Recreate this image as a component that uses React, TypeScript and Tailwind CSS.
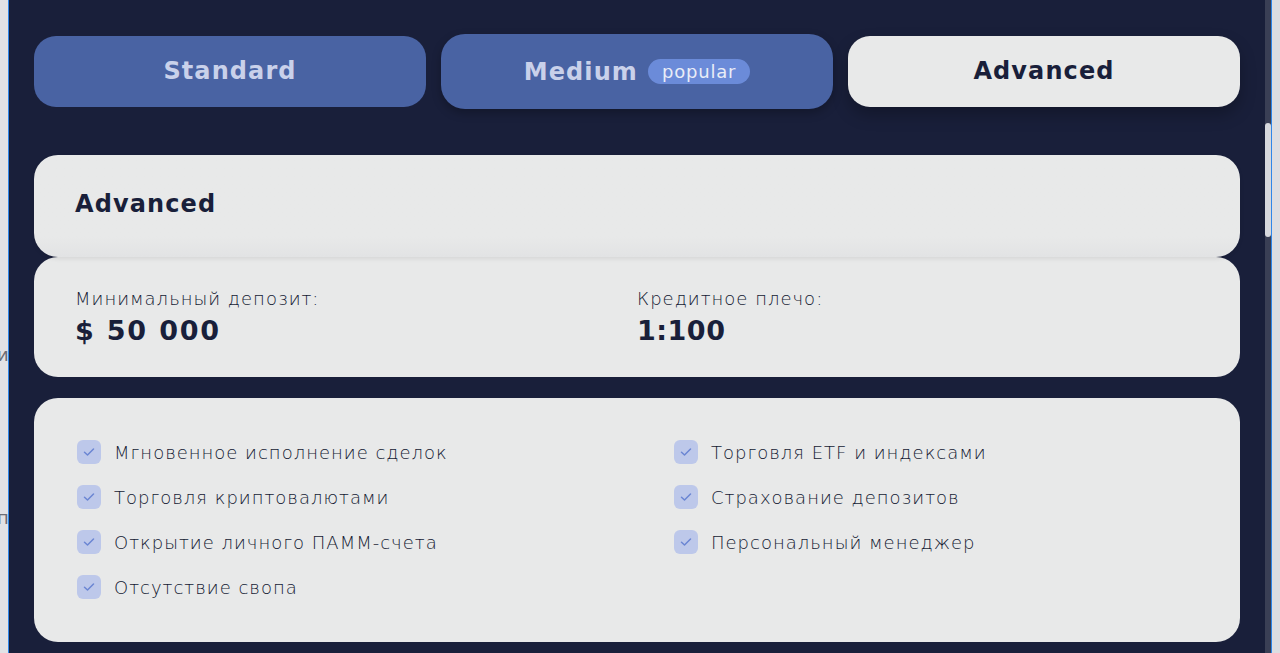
import React from "react";

const leftItems = [
  "Мгновенное исполнение сделок",
  "Торговля криптовалютами",
  "Открытие личного ПАММ-счета",
  "Отсутствие свопа",
];
const rightItems = [
  "Торговля ETF и индексами",
  "Страхование депозитов",
  "Персональный менеджер",
];

const head = { fontFamily: '"DejaVu Sans", "Liberation Sans", sans-serif' };
const body = { fontFamily: '"DejaVu Sans", "Liberation Sans", sans-serif' };

function Check() {
  return (
    <div className="w-6 h-6 rounded-[6px] bg-[#bdc8ea] flex items-center justify-center shrink-0">
      <svg width="12" height="10" viewBox="0 0 12 10" fill="none">
        <path d="M1.5 5.2 L4.5 8 L10.5 2" stroke="#6b86d3" strokeWidth="1.5" strokeLinecap="round" strokeLinejoin="round" />
      </svg>
    </div>
  );
}

function Item({ text }: { text: string }) {
  return (
    <div className="flex items-center gap-[13px] h-6">
      <Check />
      <span className="text-[18px] font-light text-[#141a33] tracking-[1px] whitespace-nowrap" style={body}>
        {text}
      </span>
    </div>
  );
}

export default function App() {
  return (
    <div className="w-full h-[653px] flex overflow-hidden bg-[#191f3a]">
      <div className="w-[8px] h-full bg-[#e1e2e5] overflow-hidden flex flex-col text-[#6b6d75] text-[18px] leading-none pt-[346px]" style={body}>
        <span className="-ml-[3px]">и</span>
        <span className="-ml-[3px] mt-[145px]">п</span>
      </div>
      <div className="w-px h-full bg-[#2f86e8]" />
      <div className="flex-1 h-full px-[25px] pt-[34px]">
        <div className="grid grid-cols-3 gap-[15px] items-center">
          <div className="h-[71px] rounded-[22px] bg-[#4963a3] flex items-center justify-center">
            <span className="text-[24px] font-bold text-[#c9d1ea] tracking-[1.1px] -mt-[2px]" style={head}>Standard</span>
          </div>
          <div className="h-[75px] rounded-[24px] bg-[#4963a3] flex items-center justify-center gap-[10px] shadow-[0_4px_10px_rgba(0,0,0,0.25)]">
            <span className="text-[24px] font-bold text-[#c9d1ea] tracking-[1.1px]" style={head}>Medium</span>
            <span className="h-[25px] px-[14px] rounded-full bg-[#6b8bd9] text-[#e9edf7] text-[18px] tracking-[0.8px] flex items-center" style={body}>popular</span>
          </div>
          <div className="h-[71px] rounded-[22px] bg-[#e8e9e9] flex items-center justify-center shadow-[0_8px_16px_rgba(0,0,0,0.25)]">
            <span className="text-[24px] font-bold text-[#191f3a] tracking-[1.1px] -mt-[2px]" style={head}>Advanced</span>
          </div>
        </div>

        <div className="mt-[46px] h-[102px] rounded-[24px] bg-gradient-to-b from-[#e8e9e9] from-80% to-[#e2e3e4] flex items-center pl-[41px] shadow-[0_2px_4px_rgba(0,0,0,0.08)] relative z-10">
          <span className="text-[24px] font-bold text-[#191f3a] tracking-[1.1px] -mt-[4px]" style={head}>Advanced</span>
        </div>

        <div className="h-[120px] rounded-[24px] bg-[#e8e9e9] grid grid-cols-2 px-[41px] pt-[32px]">
          <div className="flex flex-col">
            <span className="text-[18px] font-light text-[#141a33] tracking-[1px] leading-[20px]" style={body}>Минимальный депозит:</span>
            <span className="mt-[2px] text-[27px] font-bold text-[#191f3a] tracking-[1.8px] leading-[40px]" style={head}>$ 50 000</span>
          </div>
          <div className="flex flex-col">
            <span className="text-[18px] font-light text-[#141a33] tracking-[1px] leading-[20px]" style={body}>Кредитное плечо:</span>
            <span className="mt-[2px] text-[27px] font-bold text-[#191f3a] tracking-[0.5px] leading-[40px]" style={head}>1:100</span>
          </div>
        </div>

        <div className="mt-[21px] h-[244px] rounded-[24px] bg-[#e8e9e9] grid grid-cols-[597px_1fr] pl-[43px] pt-[42px]">
          <div className="flex flex-col gap-[21px]">
            {leftItems.map((t) => (
              <Item key={t} text={t} />
            ))}
          </div>
          <div className="flex flex-col gap-[21px]">
            {rightItems.map((t) => (
              <Item key={t} text={t} />
            ))}
          </div>
        </div>
      </div>
      <div className="w-[6px] h-full bg-[#3a3f55] pt-[123px]">
        <div className="h-[114px] w-[6px] rounded-full bg-[#d6d8dd]" />
      </div>
      <div className="w-px h-full bg-[#2f86e8]" />
      <div className="w-[8px] h-full bg-[#dcdde1]" />
    </div>
  );
}
